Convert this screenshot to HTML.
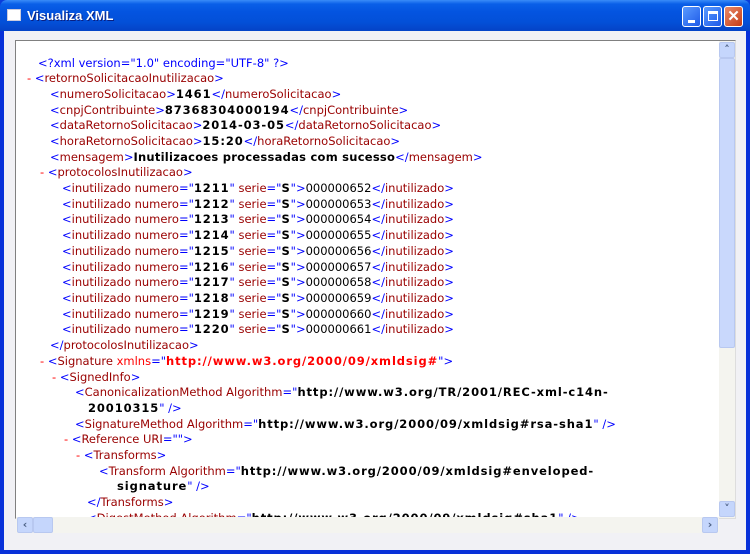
<!DOCTYPE html>
<html><head><style>
*{margin:0;padding:0;box-sizing:border-box}
body{width:750px;height:554px;overflow:hidden;background:#0a3ddb;font-family:"DejaVu Sans",Verdana,sans-serif;position:relative}
#win{position:absolute;left:0;top:0;width:750px;height:554px;background:#0831d9;border-radius:7px 7px 0 0}
#title{position:absolute;left:0;top:0;width:750px;height:31px;border-radius:7px 7px 0 0;background:linear-gradient(#3a8cf8 0,#0a5fe8 4px,#0454e0 12px,#0350d8 22px,#0444c8 30px)}
#ttext{position:absolute;left:27px;top:8px;color:#fff;font:bold 13px "Liberation Sans",sans-serif;text-shadow:1px 1px #0a1f80}
#ticon{position:absolute;left:7px;top:9px;width:14px;height:12px;background:#fff;border:1px solid #ccd}
.btn{position:absolute;top:6px;width:19px;height:21px;border:1px solid #fff;border-radius:3px;background:linear-gradient(135deg,#5a9bff,#1e5ae8)}
#client{position:absolute;left:4px;top:31px;width:742px;height:519px;background:#f1f1f5}
#box{position:absolute;left:15px;top:40px;width:721px;height:479px;border:1px solid #808080;border-right-color:#ddd;border-bottom-color:#ddd;background:#fff}
#vs{position:absolute;left:719px;top:41px;width:16px;height:477px;background:#f4f4ef}
#hs{position:absolute;left:16px;top:517px;width:703px;height:16px;background:#f4f4ef}
.sb{position:absolute;width:16px;height:16px;border:1px solid #b8c8f0;border-radius:2px;background:#c5d6fc;color:#4d6185;font-size:11px;font-weight:bold;text-align:center;line-height:14px}
.l{position:absolute;font-size:11.5px;line-height:15px;white-space:pre;color:#000}
.l b{letter-spacing:0.9px}
.t{color:#0000ff}.n{color:#990000}.r{color:#ff0000}
</style></head><body>
<div id="win">
<div id="title"><div id="ticon"></div><div id="ttext">Visualiza XML</div>
<div class="btn" style="left:682px"><div style="position:absolute;left:5px;top:13px;width:7px;height:3px;background:#fff"></div></div>
<div class="btn" style="left:703px"><div style="position:absolute;left:4px;top:4px;width:10px;height:10px;border:1px solid #fff;border-top-width:3px"></div></div>
<div class="btn" style="left:724px;background:linear-gradient(135deg,#e88a6a,#c63c14);color:#fff;font:bold 15px 'Liberation Sans';text-align:center;line-height:20px">✕</div>
</div>
<div id="client"></div>
<div id="box"></div>
<div id="vs"><div class="sb" style="left:0;top:1px">˄</div><div class="sb" style="left:0;top:17px;height:290px;background:#c9d8fc"></div><div class="sb" style="left:0;top:460px">˅</div></div>
<div id="hs"><div class="sb" style="left:1px;top:0">‹</div><div class="sb" style="left:17px;top:0;width:20px"></div><div class="sb" style="left:686px;top:0">›</div></div>
<div style="position:absolute;left:16px;top:41px;width:703px;height:476px;overflow:hidden">
<div style="position:absolute;left:-16px;top:-41px">
<div class="l" style="left:38px;top:56px"><span class="t">&lt;?xml version="1.0" encoding="UTF-8" ?&gt;</span></div>
<div class="l" style="left:27px;top:71px"><span class="r">- </span><span class="t">&lt;</span><span class="n">retornoSolicitacaoInutilizacao</span><span class="t">&gt;</span></div>
<div class="l" style="left:50px;top:87px"><span class="t">&lt;</span><span class="n">numeroSolicitacao</span><span class="t">&gt;</span><b>1461</b><span class="t">&lt;/</span><span class="n">numeroSolicitacao</span><span class="t">&gt;</span></div>
<div class="l" style="left:50px;top:103px"><span class="t">&lt;</span><span class="n">cnpjContribuinte</span><span class="t">&gt;</span><b>87368304000194</b><span class="t">&lt;/</span><span class="n">cnpjContribuinte</span><span class="t">&gt;</span></div>
<div class="l" style="left:50px;top:118px"><span class="t">&lt;</span><span class="n">dataRetornoSolicitacao</span><span class="t">&gt;</span><b>2014-03-05</b><span class="t">&lt;/</span><span class="n">dataRetornoSolicitacao</span><span class="t">&gt;</span></div>
<div class="l" style="left:50px;top:134px"><span class="t">&lt;</span><span class="n">horaRetornoSolicitacao</span><span class="t">&gt;</span><b>15:20</b><span class="t">&lt;/</span><span class="n">horaRetornoSolicitacao</span><span class="t">&gt;</span></div>
<div class="l" style="left:50px;top:150px"><span class="t">&lt;</span><span class="n">mensagem</span><span class="t">&gt;</span><b style="letter-spacing:0.25px">Inutilizacoes processadas com sucesso</b><span class="t">&lt;/</span><span class="n">mensagem</span><span class="t">&gt;</span></div>
<div class="l" style="left:40px;top:165px"><span class="r">- </span><span class="t">&lt;</span><span class="n">protocolosInutilizacao</span><span class="t">&gt;</span></div>
<div class="l" style="left:62px;top:181px"><span class="t">&lt;</span><span class="n">inutilizado numero</span><span class="t">="</span><b>1211</b><span class="t">"</span><span class="n"> serie</span><span class="t">="</span><b>S</b><span class="t">"&gt;</span>000000652<span class="t">&lt;/</span><span class="n">inutilizado</span><span class="t">&gt;</span></div>
<div class="l" style="left:62px;top:197px"><span class="t">&lt;</span><span class="n">inutilizado numero</span><span class="t">="</span><b>1212</b><span class="t">"</span><span class="n"> serie</span><span class="t">="</span><b>S</b><span class="t">"&gt;</span>000000653<span class="t">&lt;/</span><span class="n">inutilizado</span><span class="t">&gt;</span></div>
<div class="l" style="left:62px;top:212px"><span class="t">&lt;</span><span class="n">inutilizado numero</span><span class="t">="</span><b>1213</b><span class="t">"</span><span class="n"> serie</span><span class="t">="</span><b>S</b><span class="t">"&gt;</span>000000654<span class="t">&lt;/</span><span class="n">inutilizado</span><span class="t">&gt;</span></div>
<div class="l" style="left:62px;top:228px"><span class="t">&lt;</span><span class="n">inutilizado numero</span><span class="t">="</span><b>1214</b><span class="t">"</span><span class="n"> serie</span><span class="t">="</span><b>S</b><span class="t">"&gt;</span>000000655<span class="t">&lt;/</span><span class="n">inutilizado</span><span class="t">&gt;</span></div>
<div class="l" style="left:62px;top:244px"><span class="t">&lt;</span><span class="n">inutilizado numero</span><span class="t">="</span><b>1215</b><span class="t">"</span><span class="n"> serie</span><span class="t">="</span><b>S</b><span class="t">"&gt;</span>000000656<span class="t">&lt;/</span><span class="n">inutilizado</span><span class="t">&gt;</span></div>
<div class="l" style="left:62px;top:260px"><span class="t">&lt;</span><span class="n">inutilizado numero</span><span class="t">="</span><b>1216</b><span class="t">"</span><span class="n"> serie</span><span class="t">="</span><b>S</b><span class="t">"&gt;</span>000000657<span class="t">&lt;/</span><span class="n">inutilizado</span><span class="t">&gt;</span></div>
<div class="l" style="left:62px;top:275px"><span class="t">&lt;</span><span class="n">inutilizado numero</span><span class="t">="</span><b>1217</b><span class="t">"</span><span class="n"> serie</span><span class="t">="</span><b>S</b><span class="t">"&gt;</span>000000658<span class="t">&lt;/</span><span class="n">inutilizado</span><span class="t">&gt;</span></div>
<div class="l" style="left:62px;top:291px"><span class="t">&lt;</span><span class="n">inutilizado numero</span><span class="t">="</span><b>1218</b><span class="t">"</span><span class="n"> serie</span><span class="t">="</span><b>S</b><span class="t">"&gt;</span>000000659<span class="t">&lt;/</span><span class="n">inutilizado</span><span class="t">&gt;</span></div>
<div class="l" style="left:62px;top:307px"><span class="t">&lt;</span><span class="n">inutilizado numero</span><span class="t">="</span><b>1219</b><span class="t">"</span><span class="n"> serie</span><span class="t">="</span><b>S</b><span class="t">"&gt;</span>000000660<span class="t">&lt;/</span><span class="n">inutilizado</span><span class="t">&gt;</span></div>
<div class="l" style="left:62px;top:322px"><span class="t">&lt;</span><span class="n">inutilizado numero</span><span class="t">="</span><b>1220</b><span class="t">"</span><span class="n"> serie</span><span class="t">="</span><b>S</b><span class="t">"&gt;</span>000000661<span class="t">&lt;/</span><span class="n">inutilizado</span><span class="t">&gt;</span></div>
<div class="l" style="left:50px;top:338px"><span class="t">&lt;/</span><span class="n">protocolosInutilizacao</span><span class="t">&gt;</span></div>
<div class="l" style="left:40px;top:354px"><span class="r">- </span><span class="t">&lt;</span><span class="n">Signature </span><span class="r">xmlns</span><span class="t">="</span><b class="r">http://www.w3.org/2000/09/xmldsig#</b><span class="t">"&gt;</span></div>
<div class="l" style="left:52px;top:370px"><span class="r">- </span><span class="t">&lt;</span><span class="n">SignedInfo</span><span class="t">&gt;</span></div>
<div class="l" style="left:75px;top:385px"><span class="t">&lt;</span><span class="n">CanonicalizationMethod Algorithm</span><span class="t">="</span><b>http://www.w3.org/TR/2001/REC-xml-c14n-</b></div>
<div class="l" style="left:88px;top:401px"><b>20010315</b><span class="t">" /&gt;</span></div>
<div class="l" style="left:75px;top:417px"><span class="t">&lt;</span><span class="n">SignatureMethod Algorithm</span><span class="t">="</span><b>http://www.w3.org/2000/09/xmldsig#rsa-sha1</b><span class="t">" /&gt;</span></div>
<div class="l" style="left:64px;top:432px"><span class="r">- </span><span class="t">&lt;</span><span class="n">Reference URI</span><span class="t">=""&gt;</span></div>
<div class="l" style="left:76px;top:448px"><span class="r">- </span><span class="t">&lt;</span><span class="n">Transforms</span><span class="t">&gt;</span></div>
<div class="l" style="left:99px;top:464px"><span class="t">&lt;</span><span class="n">Transform Algorithm</span><span class="t">="</span><b>http://www.w3.org/2000/09/xmldsig#enveloped-</b></div>
<div class="l" style="left:117px;top:479px"><b>signature</b><span class="t">" /&gt;</span></div>
<div class="l" style="left:87px;top:495px"><span class="t">&lt;/</span><span class="n">Transforms</span><span class="t">&gt;</span></div>
<div class="l" style="left:87px;top:511px"><span class="t">&lt;</span><span class="n">DigestMethod Algorithm</span><span class="t">="</span><b>http://www.w3.org/2000/09/xmldsig#sha1</b><span class="t">" /&gt;</span></div>
</div></div>
</div>
</body></html>
